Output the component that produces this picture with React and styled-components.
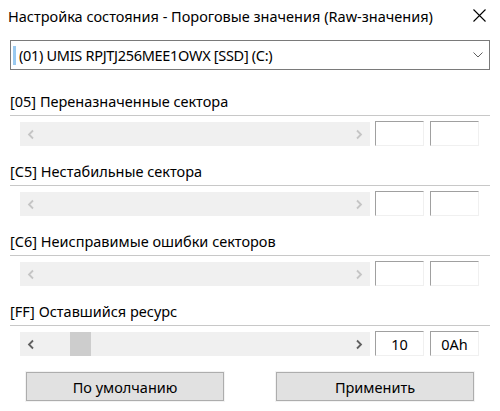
import React from "react";
import styled, { createGlobalStyle } from "styled-components";

const Global = createGlobalStyle`
  html, body { margin: 0; padding: 0; background: #ffffff; }
  body { font-family: "Noto Sans", "Open Sans", sans-serif; color: #000; }
  * { box-sizing: border-box; }
`;

const Window = styled.div`
  width: 500px;
  height: 411px;
  background: #ffffff;
  display: flex;
  flex-direction: column;
  font-size: 14.5px;
`;

const TitleBar = styled.div`
  height: 32px;
  display: flex;
  align-items: center;
  justify-content: space-between;
  padding: 0 9px 0 8px;
`;

const Title = styled.div`
  line-height: 20px;
  margin-top: -1px;
`;

const CloseBtn = styled.div`
  width: 24px;
  height: 24px;
  display: flex;
  align-items: center;
  justify-content: center;
  margin-top: -2px;
`;

const Combo = styled.div`
  margin: 8px 10px 0 10px;
  height: 30px;
  border: 1px solid #7a7a7a;
  display: flex;
  align-items: center;
  padding: 0 6px 0 2px;
`;

const FocusBar = styled.div`
  width: 3px;
  height: 19px;
  background: #99c9ef;
  margin-right: 3px;
`;

const ComboText = styled.div`
  flex: 1;
  line-height: 20px;
  letter-spacing: -0.3px;
`;

const Group = styled.div`
  display: flex;
  flex-direction: column;
  padding: 0 10px;
  margin-top: ${(p) => p.$top}px;
`;

const Label = styled.div`
  line-height: 20px;
  height: 20px;
`;

const Separator = styled.div`
  height: 1px;
  background: #c8c8c8;
  margin-top: 4px;
`;

const Row = styled.div`
  display: flex;
  align-items: flex-start;
  margin-top: 5px;
  padding-left: 10px;
`;

const Track = styled.div`
  width: 350px;
  height: 24px;
  margin-top: 1px;
  background: #f0f0f0;
  display: flex;
  align-items: center;
  justify-content: space-between;
  position: relative;
  padding: 0 7px;
`;

const Thumb = styled.div`
  position: absolute;
  top: 0;
  left: ${(p) => p.$left}px;
  width: 21px;
  height: 24px;
  background: #cdcdcd;
`;

const ValueBox = styled.div`
  width: 49px;
  height: 25px;
  margin-left: ${(p) => p.$ml}px;
  border-top: 1px solid #a0a0a0;
  border-left: 1px solid #a0a0a0;
  border-right: 1px solid #f0f0f0;
  border-bottom: 1px solid #f0f0f0;
  display: flex;
  align-items: center;
  justify-content: center;
  line-height: 20px;
`;

const Buttons = styled.div`
  display: flex;
  justify-content: space-between;
  padding: 0 25px;
  margin-top: 15px;
`;

const Button = styled.div`
  width: 200px;
  height: 31px;
  border: 1px solid #f3f3f3;
  display: flex;
`;

const ButtonFace = styled.div`
  flex: 1;
  border: 1px solid #adadad;
  background: #e1e1e1;
  display: flex;
  align-items: center;
  justify-content: center;
  line-height: 20px;
`;

const Arrow = ({ dir, color }) => (
  <svg width="8" height="11" viewBox="0 0 8 11">
    <path
      d={dir === "left" ? "M6 1.5 L2 5.5 L6 9.5" : "M2 1.5 L6 5.5 L2 9.5"}
      fill="none"
      stroke={color}
      strokeWidth="1.8"
    />
  </svg>
);

const groups = [
  { label: "[05] Переназначенные сектора", enabled: false, top: 21 },
  { label: "[C5] Нестабильные сектора", enabled: false, top: 15 },
  { label: "[C6] Неисправимые ошибки секторов", enabled: false, top: 15 },
  { label: "[FF] Оставшийся ресурс", enabled: true, top: 15, v1: "10", v2: "0Ah" },
];

export default function App() {
  return (
    <Window>
      <Global />
      <TitleBar>
        <Title>Настройка состояния - Пороговые значения (Raw-значения)</Title>
        <CloseBtn>
          <svg width="13" height="13" viewBox="0 0 13 13">
            <path d="M0.5 0.5 L12.5 12.5 M12.5 0.5 L0.5 12.5" stroke="#000" strokeWidth="1.1" />
          </svg>
        </CloseBtn>
      </TitleBar>
      <Combo>
        <FocusBar />
        <ComboText>(01) UMIS RPJTJ256MEE1OWX [SSD] (C:)</ComboText>
        <svg width="10" height="6" viewBox="0 0 10 6">
          <path d="M0.5 0.5 L5 5 L9.5 0.5" fill="none" stroke="#606060" strokeWidth="1" />
        </svg>
      </Combo>
      {groups.map((g) => (
        <Group key={g.label} $top={g.top}>
          <Label>{g.label}</Label>
          <Separator />
          <Row>
            <Track>
              {g.enabled && <Thumb $left={50} />}
              <Arrow dir="left" color={g.enabled ? "#606060" : "#c5c5c5"} />
              <Arrow dir="right" color={g.enabled ? "#606060" : "#c5c5c5"} />
            </Track>
            <ValueBox $ml={5}>{g.v1 || ""}</ValueBox>
            <ValueBox $ml={6}>{g.v2 || ""}</ValueBox>
          </Row>
        </Group>
      ))}
      <Buttons>
        <Button>
          <ButtonFace>По умолчанию</ButtonFace>
        </Button>
        <Button>
          <ButtonFace>Применить</ButtonFace>
        </Button>
      </Buttons>
    </Window>
  );
}
